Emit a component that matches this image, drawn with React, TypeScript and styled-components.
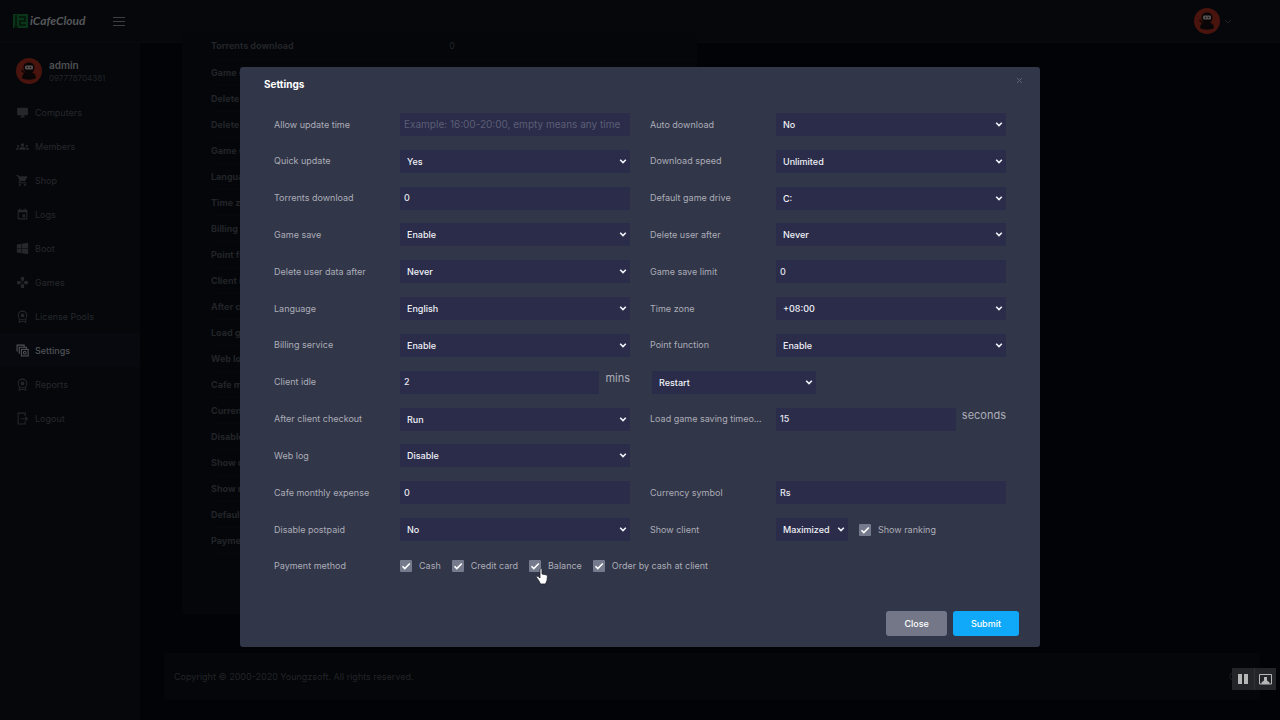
import React from "react";
import styled, { createGlobalStyle } from "styled-components";
import {
  MdDesktopWindows,
  MdGroups,
  MdShoppingCart,
  MdEvent,
  MdGames,
} from "react-icons/md";
import { FaWindows } from "react-icons/fa";

const GlobalStyle = createGlobalStyle`
  *, *::before, *::after { box-sizing: border-box; }
  body {
    margin: 0;
    background: #020307;
    color: #222428;
    font-family: Inter, "Open Sans", sans-serif;
    font-size: 9px;
    overflow: hidden;
  }
  button, input, select { font: inherit; }
`;

/* ---------- page behind the dialog ---------- */

const Page = styled.div`
  min-height: 100vh;
  display: flex;
  flex-direction: column;
`;

const TopBar = styled.header`
  display: flex;
  align-items: center;
  height: 43px;
  background: #05070b;
  border-bottom: 1px solid #080a0e;
`;

const Brand = styled.a`
  display: flex;
  align-items: center;
  gap: 1px;
  width: 113px;
  padding-left: 13px;
  color: #55575a;
  font-family: Lato, sans-serif;
  font-size: 12px;
  font-style: italic;
  font-weight: 700;
  line-height: 16px;
  text-decoration: none;
`;

const IconButton = styled.button`
  display: flex;
  align-items: center;
  gap: 4px;
  padding: 0;
  border: 0;
  background: none;
  color: #3c3e41;
`;

const AccountButton = styled(IconButton)`
  margin: 0 48px 0 auto;
`;

const Body = styled.div`
  display: flex;
  flex: 1;
`;

const Sidebar = styled.nav`
  flex: 0 0 140px;
  background: #05070b;
`;

const Profile = styled.div`
  display: flex;
  align-items: center;
  gap: 7px;
  height: 52px;
  padding: 3px 0 0 16px;
  line-height: 14px;
`;

const ProfileName = styled.div`
  color: #4e5053;
  font-size: 10px;
  font-weight: 600;
`;

const ProfileId = styled.div`
  font-size: 8px;
  line-height: 12px;
`;

const NavLink = styled.a<{ $active?: boolean }>`
  display: flex;
  align-items: center;
  gap: 6px;
  height: 34px;
  padding-left: 16px;
  background: ${(p) => (p.$active ? "#07090f" : "transparent")};
  color: ${(p) => (p.$active ? "#505256" : "#25272b")};
  font-weight: ${(p) => (p.$active ? 500 : 400)};
  text-decoration: none;

  svg { width: 13px; height: 13px; }
`;

const Content = styled.main`
  flex: 1;
  min-width: 0;
  padding: 0 20px 20px 24px;
`;

const SummaryCard = styled.section`
  width: 47%;
  margin: -10px 0 39px 18px;
  padding: 0 0 60px 29px;
  background: #04060a;
`;

const SummaryTable = styled.table`
  width: 100%;
  border-collapse: collapse;

  th, td {
    height: 26px;
    padding: 0;
    border-bottom: 1px solid #06080c;
    text-align: left;
  }
  th { width: 49%; font-weight: 700; }
`;

const Footer = styled.footer`
  display: flex;
  justify-content: space-between;
  align-items: center;
  height: 47px;
  padding: 0 6px 0 10px;
  background: #040609;
`;

/* ---------- dialog ---------- */

const Overlay = styled.div`
  position: fixed;
  inset: 0;
  z-index: 2;
  display: flex;
  justify-content: center;
  align-items: flex-start;
  padding: 67px 20px 20px;
`;

const Dialog = styled.form`
  width: 100%;
  max-width: 800px;
  border-radius: 3px;
  background: #323649;
  color: #abadb7;
`;

const DialogHeader = styled.div`
  display: flex;
  justify-content: space-between;
  align-items: flex-start;
  height: 46px;
  padding: 10px 17px 0 24px;
`;

const DialogTitle = styled.h2`
  margin: 0;
  color: #fff;
  font-size: 10px;
  line-height: 14px;
  font-weight: 700;
`;

const DismissButton = styled.button`
  display: flex;
  padding: 0;
  border: 0;
  background: none;
  color: #5b6074;
`;

const Rows = styled.div`
  display: flex;
  flex-direction: column;
  justify-content: space-between;
  min-height: 465px;
  padding: 0 34px;
`;

const Row = styled.div`
  display: grid;
  grid-template-columns: 1fr 1fr;
  gap: 20px;
`;

const Cell = styled.div<{ $wide?: boolean }>`
  display: flex;
  align-items: center;
  height: 23px;
  min-width: 0;
  grid-column: ${(p) => (p.$wide ? "1 / -1" : "auto")};
`;

const Label = styled.label`
  flex: 0 0 112px;
  margin-right: 14px;
  overflow: hidden;
  text-overflow: ellipsis;
  white-space: nowrap;
  line-height: 14px;
`;

const GroupLabel = styled(Label).attrs({ as: "span" })``;

const TextInput = styled.input`
  flex: 1;
  min-width: 0;
  height: 23px;
  padding: 0 4px 1px;
  border: 0;
  border-radius: 0;
  background: #2a2c4a;
  color: #e4e5ee;
  font-weight: 500;

  &::placeholder { color: #5c5e74; font-weight: 400; font-size: 10px; }
`;

const SelectBox = styled.span<{ $width?: number; $indent?: boolean }>`
  position: relative;
  flex: ${(p) => (p.$width ? `0 0 ${p.$width}px` : "1")};
  margin-left: ${(p) => (p.$indent ? "2px" : "0")};
  height: 23px;

  svg {
    position: absolute;
    right: 3px;
    top: 8px;
    pointer-events: none;
  }
`;

const NativeSelect = styled.select`
  appearance: none;
  width: 100%;
  height: 23px;
  padding: 0 14px 0 7px;
  border: 0;
  border-radius: 0;
  background: #2a2c4a;
  color: #f0f1f6;
  font-weight: 500;
`;

const Unit = styled.span`
  align-self: flex-start;
  padding-left: 6px;
  font-size: 11px;
  line-height: 15px;
`;

const CheckLabel = styled.label<{ $spaced?: boolean }>`
  position: relative;
  display: flex;
  align-items: center;
  gap: 7px;
  margin-left: ${(p) => (p.$spaced ? "11px" : "0")};
  line-height: 14px;
  white-space: nowrap;
`;

const CheckGroup = styled.div`
  display: flex;
  gap: 11px;
`;

const CheckMark = styled.span`
  display: grid;
  width: 12px;
  height: 12px;

  > * { grid-area: 1 / 1; }
  svg { pointer-events: none; }
`;

const NativeCheck = styled.input`
  appearance: none;
  width: 12px;
  height: 12px;
  margin: 0;
  border-radius: 1px;
  background: #757a8c;
`;

const Pointer = styled.svg`
  position: absolute;
  left: 7px;
  top: 9px;
  pointer-events: none;
`;

const Actions = styled.div`
  display: flex;
  justify-content: flex-end;
  gap: 6px;
  padding: 33px 21px 11px;
`;

const ActionButton = styled.button<{ $primary?: boolean }>`
  height: 25px;
  padding: 0 18px;
  border: 0;
  border-radius: 3px;
  background: ${(p) => (p.$primary ? "#10a9fa" : "#737788")};
  color: #fff;
  font-weight: 500;
`;

const PlayerBar = styled.div`
  position: fixed;
  right: 4px;
  bottom: 30px;
  z-index: 3;
  display: flex;
  background: #242528;
`;

const PlayerButton = styled.button`
  display: flex;
  align-items: center;
  justify-content: center;
  width: 22px;
  height: 22px;
  padding: 0;
  border: 0;
  background: none;
  color: #b6b6b6;

  & + & { border-left: 1px solid #303134; }
`;

/* ---------- drawings ---------- */

const LogoMark = () => (
  <svg width="16" height="15" viewBox="0 0 16 15" fill="none" aria-hidden="true">
    <rect x="0" y="0" width="15" height="14" fill="#0a3519" />
    <path d="M3 1v12M6 3h6v4H7v4h6M1 13h4" stroke="#03130a" strokeWidth="1.5" />
  </svg>
);

const Avatar = ({ size }: { size: number }) => (
  <svg width={size} height={size} viewBox="0 0 26 26" aria-hidden="true">
    <circle cx="13" cy="13" r="13" fill="#48140d" />
    <path d="M13 4.500c-4 0-5.500 2.500-5.500 5 0 2.500 1 4 2.500 5-2.500.8-4 2.500-4 5.500 2.500 2.300 11.500 2.300 14 0 0-3-1.500-4.700-4-5.500 1.500-1 2.500-2.500 2.500-5s-1.500-5-5.500-5z" fill="#0a0607" />
    <path d="M5.500 12l4 4" stroke="#0a0607" strokeWidth="1.500" />
    <rect x="9" y="7.500" width="8" height="4" rx="1" fill="#55504f" />
    <circle cx="11.500" cy="9.500" r=".7" fill="#111" />
    <circle cx="14.500" cy="9.500" r=".7" fill="#111" />
  </svg>
);

const Chevron = () => (
  <svg width="8" height="7" viewBox="0 0 8 7" fill="none" aria-hidden="true">
    <path d="M1.200 1.800L4 4.600l2.800-2.800" stroke="#f4f5fa" strokeWidth="1.600" />
  </svg>
);

const RibbonIcon = () => (
  <svg viewBox="0 0 24 24" fill="none" stroke="currentColor" strokeWidth="2" aria-hidden="true">
    <circle cx="12" cy="10" r="8" />
    <circle cx="12" cy="10" r="2.500" fill="currentColor" />
    <path d="M6 16v6.500l6-2 6 2V16" />
  </svg>
);

const StackIcon = () => (
  <svg viewBox="0 0 24 24" fill="none" stroke="currentColor" strokeWidth="2" aria-hidden="true">
    <path d="M2 14V2h13v3M6 18V6h13v3" />
    <rect x="10" y="10" width="12.500" height="12" />
    <circle cx="16.200" cy="16" r="2.500" />
  </svg>
);

const ExitIcon = () => (
  <svg viewBox="0 0 24 24" fill="none" stroke="currentColor" strokeWidth="2" aria-hidden="true">
    <path d="M17 8V2H4v20h13v-5M9 12.500h12M17.500 9l3.500 3.500-3.500 3.500" />
  </svg>
);

const HandPointer = () => (
  <Pointer width="12" height="17" viewBox="0 0 12 17" aria-hidden="true">
    <path
      d="M4 1.500c0-1.200 2-1.200 2 0V6l4 .8c1 .3 1.500 1 1.400 2L11 12.500 9.500 16h-5L3 13 .6 9.500C.2 8.300 1.500 7.800 2.300 8.600L4 10z"
      fill="#fff"
      stroke="#20222c"
      strokeWidth=".8"
    />
  </Pointer>
);

/* ---------- form parts ---------- */

type SelectProps = { id: string; value: string; width?: number; indent?: boolean; label?: string };

const Select = ({ id, value, width, indent, label }: SelectProps) => (
  <SelectBox $width={width} $indent={indent}>
    <NativeSelect id={id} defaultValue={value} aria-label={label}>
      <option>{value}</option>
    </NativeSelect>
    <Chevron />
  </SelectBox>
);

const Check = ({ text, spaced, children }: { text: string; spaced?: boolean; children?: React.ReactNode }) => (
  <CheckLabel $spaced={spaced}>
    <CheckMark>
      <NativeCheck type="checkbox" defaultChecked />
      <svg width="12" height="12" viewBox="0 0 12 12" fill="none" aria-hidden="true">
        <path d="M2.500 6.200l2.300 2.300 5-5" stroke="#fff" strokeWidth="1.600" />
      </svg>
    </CheckMark>
    {text}
    {children}
  </CheckLabel>
);

type FieldProps = { label: string; value?: string; kind?: "text" | "select"; unit?: string; placeholder?: string };

const Field = ({ label, value = "", kind = "select", unit, placeholder }: FieldProps) => {
  const id = label.toLowerCase().replace(/\s+/g, "-");
  return (
    <Cell>
      <Label htmlFor={id}>{label}</Label>
      {kind === "select" ? (
        <Select id={id} value={value} />
      ) : (
        <TextInput id={id} defaultValue={value} placeholder={placeholder} />
      )}
      {unit && <Unit>{unit}</Unit>}
    </Cell>
  );
};

const navItems = [
  { name: "Computers", icon: <MdDesktopWindows /> },
  { name: "Members", icon: <MdGroups /> },
  { name: "Shop", icon: <MdShoppingCart /> },
  { name: "Logs", icon: <MdEvent /> },
  { name: "Boot", icon: <FaWindows /> },
  { name: "Games", icon: <MdGames /> },
  { name: "License Pools", icon: <RibbonIcon /> },
  { name: "Settings", icon: <StackIcon />, active: true },
  { name: "Reports", icon: <RibbonIcon /> },
  { name: "Logout", icon: <ExitIcon /> },
];

const summary: [string, string][] = [
  ["Torrents download", "0"],
  ["Game save", "Enable"],
  ["Delete user after", "Never"],
  ["Delete user data after", "Never"],
  ["Game save limit", "0"],
  ["Language", "English"],
  ["Time zone", "+08:00"],
  ["Billing service", "Enable"],
  ["Point function", "Enable"],
  ["Client idle", "2"],
  ["After client checkout", "Run"],
  ["Load game saving timeout", "15"],
  ["Web log", "Disable"],
  ["Cafe monthly expense", "0"],
  ["Currency symbol", "Rs"],
  ["Disable postpaid", "No"],
  ["Show client", "Maximized"],
  ["Show ranking", "Yes"],
  ["Default game drive", "C:"],
  ["Payment method", "Cash"],
];

export default function App() {
  return (
    <>
      <GlobalStyle />
      <Page>
        <TopBar>
          <Brand href="#home">
            <LogoMark />
            iCafeCloud
          </Brand>
          <IconButton aria-label="Toggle menu">
            <svg width="12" height="9" viewBox="0 0 12 9" aria-hidden="true">
              <path d="M0 .5h12M0 4.500h12M0 8.500h12" stroke="currentColor" />
            </svg>
          </IconButton>
          <AccountButton aria-label="Account">
            <Avatar size={26} />
            <svg width="8" height="5" viewBox="0 0 8 5" fill="none" aria-hidden="true">
              <path d="M1 1l3 3 3-3" stroke="#202225" />
            </svg>
          </AccountButton>
        </TopBar>
        <Body>
          <Sidebar>
            <Profile>
              <Avatar size={26} />
              <div>
                <ProfileName>admin</ProfileName>
                <ProfileId>097778704381</ProfileId>
              </div>
            </Profile>
            {navItems.map((item) => (
              <NavLink key={item.name} href={`#${item.name}`} $active={item.active}>
                {item.icon}
                {item.name}
              </NavLink>
            ))}
          </Sidebar>
          <Content>
            <SummaryCard>
              <SummaryTable>
                <tbody>
                  {summary.map(([name, value]) => (
                    <tr key={name}>
                      <th scope="row">{name}</th>
                      <td>{value}</td>
                    </tr>
                  ))}
                </tbody>
              </SummaryTable>
            </SummaryCard>
            <Footer>
              <span>Copyright © 2000-2020 Youngzsoft. All rights reserved.</span>
              <span>Cloud</span>
            </Footer>
          </Content>
        </Body>
      </Page>

      <Overlay>
        <Dialog role="dialog" aria-labelledby="dialog-title" onSubmit={(e) => e.preventDefault()}>
          <DialogHeader>
            <DialogTitle id="dialog-title">Settings</DialogTitle>
            <DismissButton type="button" aria-label="Dismiss">
              <svg width="7" height="7" viewBox="0 0 7 7" aria-hidden="true">
                <path d="M1 1l5 5M6 1L1 6" stroke="currentColor" />
              </svg>
            </DismissButton>
          </DialogHeader>
          <Rows>
            <Row>
              <Field label="Allow update time" kind="text" placeholder="Example: 16:00-20:00, empty means any time" />
              <Field label="Auto download" value="No" />
            </Row>
            <Row>
              <Field label="Quick update" value="Yes" />
              <Field label="Download speed" value="Unlimited" />
            </Row>
            <Row>
              <Field label="Torrents download" kind="text" value="0" />
              <Field label="Default game drive" value="C:" />
            </Row>
            <Row>
              <Field label="Game save" value="Enable" />
              <Field label="Delete user after" value="Never" />
            </Row>
            <Row>
              <Field label="Delete user data after" value="Never" />
              <Field label="Game save limit" kind="text" value="0" />
            </Row>
            <Row>
              <Field label="Language" value="English" />
              <Field label="Time zone" value="+08:00" />
            </Row>
            <Row>
              <Field label="Billing service" value="Enable" />
              <Field label="Point function" value="Enable" />
            </Row>
            <Row>
              <Field label="Client idle" kind="text" value="2" unit="mins" />
              <Cell>
                <Select id="idle-action" value="Restart" width={164} indent label="Idle action" />
              </Cell>
            </Row>
            <Row>
              <Field label="After client checkout" value="Run" />
              <Field label="Load game saving timeout" kind="text" value="15" unit="seconds" />
            </Row>
            <Row>
              <Field label="Web log" value="Disable" />
            </Row>
            <Row>
              <Field label="Cafe monthly expense" kind="text" value="0" />
              <Field label="Currency symbol" kind="text" value="Rs" />
            </Row>
            <Row>
              <Field label="Disable postpaid" value="No" />
              <Cell>
                <Label htmlFor="show-client">Show client</Label>
                <Select id="show-client" value="Maximized" width={72} />
                <Check text="Show ranking" spaced />
              </Cell>
            </Row>
            <Row>
              <Cell $wide>
                <GroupLabel id="payment-label">Payment method</GroupLabel>
                <CheckGroup role="group" aria-labelledby="payment-label">
                  <Check text="Cash" />
                  <Check text="Credit card" />
                  <Check text="Balance">
                    <HandPointer />
                  </Check>
                  <Check text="Order by cash at client" />
                </CheckGroup>
              </Cell>
            </Row>
          </Rows>
          <Actions>
            <ActionButton type="button">Close</ActionButton>
            <ActionButton type="submit" $primary>Submit</ActionButton>
          </Actions>
        </Dialog>
      </Overlay>

      <PlayerBar>
        <PlayerButton aria-label="Pause">
          <svg width="10" height="10" viewBox="0 0 10 10" aria-hidden="true">
            <path d="M0 0h4v10H0zM6 0h4v10H6z" fill="currentColor" />
          </svg>
        </PlayerButton>
        <PlayerButton aria-label="Presenter view">
          <svg width="13" height="11" viewBox="0 0 13 11" aria-hidden="true">
            <path d="M.5.5h12v9.500H.5z" fill="none" stroke="currentColor" />
            <path d="M5 3h3v3.500l2.500 2V10h-8V8.500l2.500-2z" fill="currentColor" />
          </svg>
        </PlayerButton>
      </PlayerBar>
    </>
  );
}
